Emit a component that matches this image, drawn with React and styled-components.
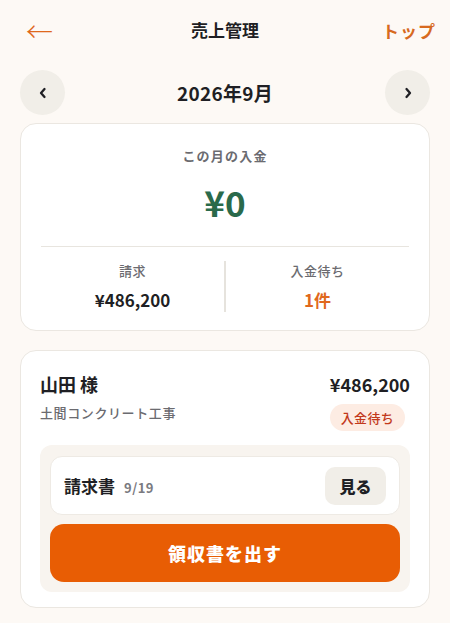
import React from "react";
import styled, { createGlobalStyle } from "styled-components";

const Global = createGlobalStyle`
  html, body { margin: 0; padding: 0; background: #fdf9f5; }
  body { font-family: "Noto Sans CJK JP", "Noto Sans", sans-serif; color: #1f1f24; }
  * { box-sizing: border-box; }
`;

const Page = styled.div`
  width: 450px;
  min-height: 623px;
  background: #fdf9f5;
  padding: 0 20px 16px;
`;

const Header = styled.header`
  height: 60px;
  display: grid;
  grid-template-columns: 1fr auto 1fr;
  align-items: center;
`;

const BackLink = styled.span`
  justify-self: start;
  margin-left: 6px;
  color: #e0681c;
  font-size: 27px;
  line-height: 1;
  font-family: "Noto Sans CJK JP", sans-serif;
  font-weight: 300;
`;

const Title = styled.h1`
  margin: 0;
  font-size: 17px;
  font-weight: 700;
  line-height: 24px;
`;

const TopLink = styled.span`
  justify-self: end;
  margin-right: -6px;
  color: #d76a1f;
  font-size: 17px;
  font-weight: 700;
  letter-spacing: 1px;
`;

const MonthNav = styled.div`
  margin-top: 10px;
  height: 45px;
  display: flex;
  align-items: center;
  justify-content: space-between;
`;

const RoundBtn = styled.button`
  width: 45px;
  height: 45px;
  border-radius: 50%;
  border: none;
  background: #f1eee8;
  color: #1f1f24;
  display: flex;
  align-items: center;
  justify-content: center;
  padding: 0;
`;

const MonthLabel = styled.div`
  font-size: 19px;
  font-weight: 700;
  letter-spacing: 0.3px;
`;

const Card = styled.section`
  background: #fff;
  border: 1px solid #ebe7e1;
  border-radius: 16px;
  margin-top: ${(p) => p.$mt}px;
  padding: ${(p) => p.$pad};
`;

const SummaryLabel = styled.div`
  text-align: center;
  color: #6b6b70;
  font-size: 13px;
  font-weight: 700;
  line-height: 20px;
  letter-spacing: 1.2px;
`;

const BigAmount = styled.div`
  text-align: center;
  color: #2a6a4b;
  font-size: 35px;
  font-weight: 700;
  line-height: 44px;
  margin-top: 14px;
`;

const Divider = styled.hr`
  border: none;
  border-top: 1px solid #e8e5df;
  margin: 22px 0 0;
`;

const Stats = styled.div`
  margin-top: 14px;
  display: grid;
  grid-template-columns: 1fr 2px 1fr;
`;

const VLine = styled.div`
  background: #e6e3dd;
`;

const Stat = styled.div`
  display: flex;
  flex-direction: column;
  align-items: center;
  gap: 7px;
`;

const StatLabel = styled.div`
  color: #6b6b70;
  font-size: 13px;
  font-weight: 500;
  line-height: 20px;
  letter-spacing: 0.5px;
`;

const StatValue = styled.div`
  color: ${(p) => p.$color || "#1f1f24"};
  font-size: 17px;
  font-weight: 700;
  line-height: 24px;
`;

const ItemTop = styled.div`
  display: flex;
  justify-content: space-between;
  align-items: flex-start;
`;

const Col = styled.div`
  display: flex;
  flex-direction: column;
  align-items: ${(p) => p.$align || "flex-start"};
`;

const Name = styled.div`
  font-size: 18px;
  font-weight: 700;
  line-height: 26px;
`;

const Sub = styled.div`
  margin-top: 6px;
  color: #6b6b70;
  font-size: 13px;
  font-weight: 500;
  line-height: 20px;
  letter-spacing: 0.6px;
`;

const Price = styled.div`
  font-size: 18px;
  font-weight: 700;
  line-height: 26px;
`;

const Badge = styled.span`
  margin-top: 7px;
  margin-right: 5px;
  background: #fdece3;
  color: #c2391b;
  font-size: 13px;
  font-weight: 500;
  line-height: 27px;
  padding: 0 11px;
  border-radius: 14px;
  letter-spacing: 0.3px;
`;

const Panel = styled.div`
  margin-top: 14px;
  background: #f8f4ef;
  border-radius: 12px;
  padding: 11px 10px 10px;
  display: flex;
  flex-direction: column;
  gap: 9px;
`;

const DocRow = styled.div`
  height: 59px;
  background: #fff;
  border: 1px solid #eeeae4;
  border-radius: 12px;
  display: flex;
  align-items: center;
  justify-content: space-between;
  padding: 0 13px 0 13px;
`;

const DocTitle = styled.div`
  display: flex;
  align-items: baseline;
  gap: 9px;
  font-size: 17px;
  font-weight: 700;
`;

const DocDate = styled.span`
  color: #7a7a80;
  font-size: 13px;
  font-weight: 700;
  letter-spacing: 0.5px;
`;

const ViewBtn = styled.button`
  width: 61px;
  height: 38px;
  border: none;
  border-radius: 10px;
  background: #f1eee8;
  color: #1f1f24;
  font-family: inherit;
  font-size: 16px;
  font-weight: 900;
`;

const PrimaryBtn = styled.button`
  height: 58px;
  border: none;
  border-radius: 14px;
  background: #e85d04;
  color: #fff;
  font-family: inherit;
  font-size: 18px;
  font-weight: 900;
  letter-spacing: 1px;
`;

const Chevron = ({ dir }) => (
  <svg width="10" height="12" viewBox="0 0 10 12">
    <polyline
      points={dir === "left" ? "6.5,2 3,6 6.5,10" : "3.5,2 7,6 3.5,10"}
      fill="none"
      stroke="#1f1f24"
      strokeWidth="2.3"
      strokeLinecap="round"
      strokeLinejoin="round"
    />
  </svg>
);

export default function App() {
  return (
    <>
      <Global />
      <Page>
        <Header>
          <BackLink>←</BackLink>
          <Title>売上管理</Title>
          <TopLink>トップ</TopLink>
        </Header>
        <MonthNav>
          <RoundBtn>
            <Chevron dir="left" />
          </RoundBtn>
          <MonthLabel>2026年9月</MonthLabel>
          <RoundBtn>
            <Chevron dir="right" />
          </RoundBtn>
        </MonthNav>
        <Card $mt={8} $pad="22px 20px 18px">
          <SummaryLabel>この月の入金</SummaryLabel>
          <BigAmount>¥0</BigAmount>
          <Divider />
          <Stats>
            <Stat>
              <StatLabel>請求</StatLabel>
              <StatValue>¥486,200</StatValue>
            </Stat>
            <VLine />
            <Stat>
              <StatLabel>入金待ち</StatLabel>
              <StatValue $color="#e0681c">1件</StatValue>
            </Stat>
          </Stats>
        </Card>
        <Card $mt={19} $pad="20px 19px 15px">
          <ItemTop>
            <Col>
              <Name>山田 様</Name>
              <Sub>土間コンクリート工事</Sub>
            </Col>
            <Col $align="flex-end">
              <Price>¥486,200</Price>
              <Badge>入金待ち</Badge>
            </Col>
          </ItemTop>
          <Panel>
            <DocRow>
              <DocTitle>
                請求書<DocDate>9/19</DocDate>
              </DocTitle>
              <ViewBtn>見る</ViewBtn>
            </DocRow>
            <PrimaryBtn>領収書を出す</PrimaryBtn>
          </Panel>
        </Card>
      </Page>
    </>
  );
}
